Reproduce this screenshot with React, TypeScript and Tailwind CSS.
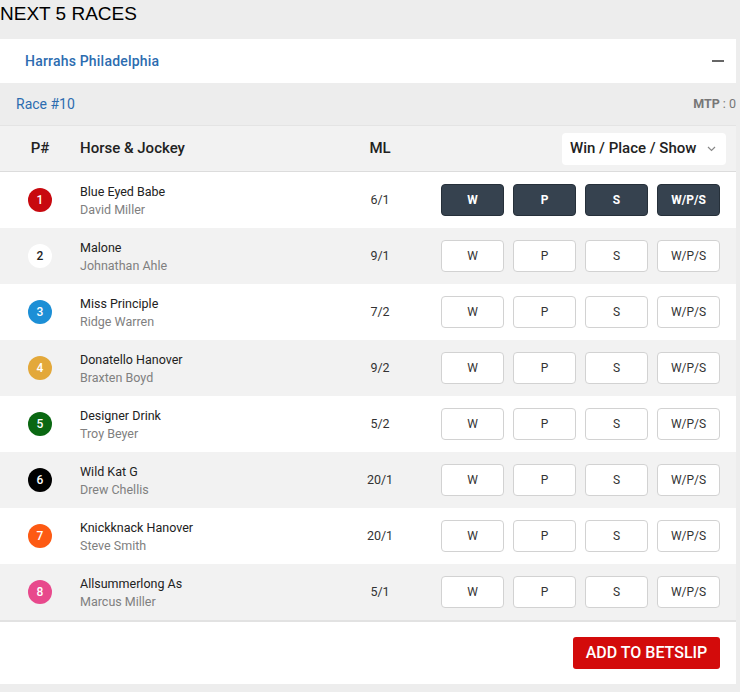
import React from "react";

interface Runner {
  num: number;
  horse: string;
  jockey: string;
  ml: string;
  color: string;
  text: string;
}

const runners: Runner[] = [
  { num: 1, horse: "Blue Eyed Babe", jockey: "David Miller", ml: "6/1", color: "bg-[#c8090f]", text: "text-white" },
  { num: 2, horse: "Malone", jockey: "Johnathan Ahle", ml: "9/1", color: "bg-white", text: "text-[#222]" },
  { num: 3, horse: "Miss Principle", jockey: "Ridge Warren", ml: "7/2", color: "bg-[#1c8fd6]", text: "text-white" },
  { num: 4, horse: "Donatello Hanover", jockey: "Braxten Boyd", ml: "9/2", color: "bg-[#e3a83a]", text: "text-white" },
  { num: 5, horse: "Designer Drink", jockey: "Troy Beyer", ml: "5/2", color: "bg-[#0a6812]", text: "text-white" },
  { num: 6, horse: "Wild Kat G", jockey: "Drew Chellis", ml: "20/1", color: "bg-black", text: "text-white" },
  { num: 7, horse: "Knickknack Hanover", jockey: "Steve Smith", ml: "20/1", color: "bg-[#fd5a13]", text: "text-white" },
  { num: 8, horse: "Allsummerlong As", jockey: "Marcus Miller", ml: "5/1", color: "bg-[#e8498c]", text: "text-white" },
];

const betTypes = ["W", "P", "S", "W/P/S"];

function BetButton({ label, selected }: { label: string; selected: boolean }) {
  return (
    <button
      className={
        selected
          ? "w-[63px] h-[32px] rounded-[4px] bg-[#36424f] border border-[#26303a] text-white text-[12px] font-bold"
          : "w-[63px] h-[32px] rounded-[4px] bg-white border border-[#d2d2d2] text-[#333] text-[12px]"
      }
    >
      {label}
    </button>
  );
}

function RunnerRow({ runner, index }: { runner: Runner; index: number }) {
  const even = index % 2 === 1;
  return (
    <div
      className={`grid grid-cols-[80px_260px_80px_1fr] items-center h-[56px] ${
        even ? "bg-[#f2f2f2]" : "bg-white"
      }`}
    >
      <div className="flex justify-center">
        <div
          className={`w-[24px] h-[24px] rounded-full flex items-center justify-center text-[12px] font-medium ${runner.color} ${runner.text}`}
        >
          {runner.num}
        </div>
      </div>
      <div className="flex flex-col gap-[1px]">
        <span className="text-[12.5px] leading-[17px] text-[#222]">{runner.horse}</span>
        <span className="text-[12.5px] leading-[17px] text-[#808080]">{runner.jockey}</span>
      </div>
      <div className="text-center text-[12.5px] text-[#333]">{runner.ml}</div>
      <div className="flex justify-end gap-[9px] pr-[16px]">
        {betTypes.map((b) => (
          <BetButton key={b} label={b} selected={index === 0} />
        ))}
      </div>
    </div>
  );
}

export default function App() {
  return (
    <div className="w-[740px] min-h-[692px] bg-[#ededed] font-['Roboto',sans-serif]">
      <h2 className="h-[39px] text-[19px] leading-[28px] text-black font-['Liberation_Sans',Arial,sans-serif]">
        NEXT 5 RACES
      </h2>
      <div className="w-[736px]">
        <div className="bg-white h-[44px] flex items-center justify-between pl-[25px] pr-[12px]">
          <span className="text-[14px] font-medium tracking-[0.2px] text-[#2c6cb0]">Harrahs Philadelphia</span>
          <span className="block w-[12px] h-[1.5px] bg-[#666]" />
        </div>
        <div className="h-[43px] flex items-center justify-between pl-[16px] border-b border-[#e4e4e4]">
          <span className="text-[14px] text-[#2c6cb0]">Race #10</span>
          <span className="text-[12.5px] text-[#777]">
            <span className="font-bold">MTP</span> : 0
          </span>
        </div>
        <div className="grid grid-cols-[80px_260px_80px_1fr] items-center h-[46px] bg-[#f2f2f2] border-b border-[#dcdcdc]">
          <div className="text-center text-[15px] font-medium text-[#222]">P#</div>
          <div className="text-[15px] font-medium text-[#222]">Horse &amp; Jockey</div>
          <div className="text-center text-[15px] font-medium text-[#222]">ML</div>
          <div className="flex justify-end pr-[10px]">
            <div className="w-[164px] h-[32px] bg-white rounded-[4px] flex items-center justify-between pl-[8px] pr-[10px]">
              <span className="text-[15px] font-medium text-[#222]">Win / Place / Show</span>
              <svg width="9" height="6" viewBox="0 0 9 6" fill="none">
                <path d="M1 1l3.5 3.5L8 1" stroke="#888" strokeWidth="1.2" />
              </svg>
            </div>
          </div>
        </div>
        {runners.map((r, i) => (
          <RunnerRow key={r.num} runner={r} index={i} />
        ))}
        <div className="bg-white h-[64px] border-t-2 border-[#e2e2e2] flex items-center justify-end pr-[16px]">
          <button className="w-[147px] h-[32px] rounded-[3px] bg-[#d30b0b] text-white text-[16px] font-medium">
            ADD TO BETSLIP
          </button>
        </div>
      </div>
    </div>
  );
}
